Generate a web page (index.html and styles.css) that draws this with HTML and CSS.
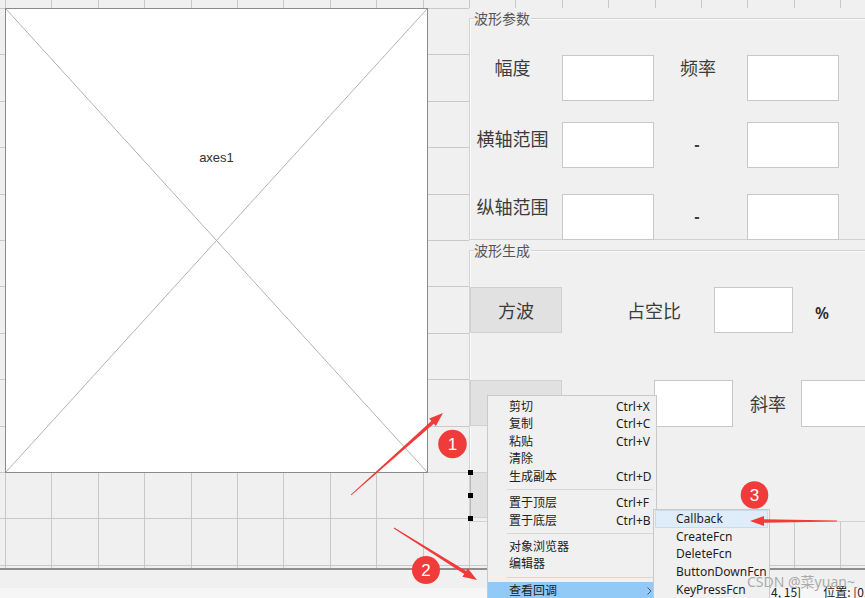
FILE: index.html
```html
<!DOCTYPE html>
<html lang="zh-CN">
<head>
<meta charset="utf-8">
<title>GUIDE 布局编辑器</title>
<link rel="stylesheet" href="styles.css">
</head>
<body>
<div class="editor">
  <div class="canvas">
    <div class="axes">
      <svg class="axes-x" viewBox="0 0 100 100" preserveAspectRatio="none">
        <line x1="0" y1="0" x2="100" y2="100"/>
        <line x1="100" y1="0" x2="0" y2="100"/>
      </svg>
      <span class="axes-label">axes1</span>
    </div>

    <div class="panel panel-params">
      <div class="panel-frame">
        <div class="panel-title">波形参数</div>
        <div class="prow prow-1">
          <span class="plabel">幅度</span>
          <span class="edit"></span>
          <span class="pmid">频率</span>
          <span class="edit"></span>
        </div>
        <div class="prow prow-2">
          <span class="plabel plabel-low">横轴范围</span>
          <span class="edit"></span>
          <span class="pmid pdash">-</span>
          <span class="edit"></span>
        </div>
        <div class="prow prow-3">
          <span class="plabel">纵轴范围</span>
          <span class="edit"></span>
          <span class="pmid pdash">-</span>
          <span class="edit"></span>
        </div>
      </div>
    </div>

    <div class="panel panel-gen">
      <div class="panel-frame">
        <div class="panel-title">波形生成</div>
        <div class="grow grow-1">
          <span class="btn">方波</span>
          <span class="glabel gl-duty">占空比</span>
          <span class="edit edit-s es-duty"></span>
          <span class="pct">%</span>
        </div>
        <div class="grow grow-2">
          <span class="btn"></span>
          <span class="glabel gl-width"></span>
          <span class="edit edit-s es-width"></span>
          <span class="glabel gl-slope">斜率</span>
          <span class="edit edit-s es-slope"></span>
        </div>
        <div class="grow grow-3">
          <span class="btn btn-selected">
            <i class="handle h-top"></i>
            <i class="handle h-mid"></i>
            <i class="handle h-bot"></i>
          </span>
        </div>
      </div>
    </div>
  </div>
  <div class="statusbar">
    <span>大小: [4, 15]</span>
    <span>位置: [0, 0]</span>
  </div>
</div>

<div class="ctx-menu">
  <div class="mi"><span>剪切</span><span>Ctrl+X</span></div>
  <div class="mi"><span>复制</span><span>Ctrl+C</span></div>
  <div class="mi"><span>粘贴</span><span>Ctrl+V</span></div>
  <div class="mi"><span>清除</span><span></span></div>
  <div class="mi"><span>生成副本</span><span>Ctrl+D</span></div>
  <div class="mi-sep"></div>
  <div class="mi"><span>置于顶层</span><span>Ctrl+F</span></div>
  <div class="mi"><span>置于底层</span><span>Ctrl+B</span></div>
  <div class="mi-sep"></div>
  <div class="mi"><span>对象浏览器</span><span></span></div>
  <div class="mi"><span>编辑器</span><span></span></div>
  <div class="mi-sep"></div>
  <div class="mi mi-active"><span>查看回调</span><span></span>
    <svg class="mi-arrow" width="5" height="8" viewBox="0 0 5 8"><path d="M0.5 0.5 L4 4 L0.5 7.5"/></svg>
  </div>
</div>

<div class="submenu">
  <div class="si si-active">Callback</div>
  <div class="si">CreateFcn</div>
  <div class="si">DeleteFcn</div>
  <div class="si">ButtonDownFcn</div>
  <div class="si">KeyPressFcn</div>
</div>

<div class="watermark">CSDN @菜yuan~</div>

<svg class="annot" width="865" height="598" viewBox="0 0 865 598">
  <g class="annot-red">
    <polygon points="351.33,495.37 433.75,423.66 435.88,426.05 443,413 429.22,418.59 431.35,420.98 350.67,494.63"/>
    <polygon points="393.73,528.42 464.17,574.09 462.47,576.8 477,580 467.79,568.32 466.09,571.03 394.27,527.58"/>
    <polygon points="837,521.6 764,522.8 764,526 750,521 764,516 764,519.2 837,520.4"/>
    <circle cx="452.5" cy="444" r="14.3"/>
    <circle cx="426" cy="570" r="14"/>
    <circle cx="754.5" cy="495" r="13.8"/>
  </g>
  <g class="annot-num">
    <text x="452.5" y="450">1</text>
    <text x="426" y="576">2</text>
    <text x="754.5" y="501">3</text>
  </g>
</svg>
</body>
</html>
```

FILE: styles.css
```css
* { box-sizing: border-box; }

html, body {
  margin: 0;
  padding: 0;
}

body {
  width: 865px;
  height: 598px;
  overflow: hidden;
  position: relative;
  background: #f0f0f0;
  font-family: "Noto Sans CJK SC", "Noto Sans", sans-serif;
  color: #333;
}

.editor {
  display: flex;
  flex-direction: column;
  height: 598px;
}

/* ---------- layout canvas with grid ---------- */
.canvas {
  position: relative;
  flex: none;
  height: 570px;
  border-bottom: 2px solid #8e8e8e;
  background-color: #f0f0f0;
  background-image:
    repeating-linear-gradient(90deg, #c9c9c9 5px, #c9c9c9 6px, transparent 6px, transparent 51.4px),
    repeating-linear-gradient(180deg, #c9c9c9 8px, #c9c9c9 9px, transparent 9px, transparent 54.4px);
}

/* axes placeholder */
.axes {
  position: absolute;
  left: 5px;
  top: 8px;
  width: 423px;
  height: 465px;
  background: #fff;
  border: 1px solid #8a8a8a;
  display: flex;
  justify-content: center;
  padding-top: 141px;
}

.axes-x {
  position: absolute;
  inset: 0;
  width: 100%;
  height: 100%;
}

.axes-x line {
  stroke: #b2b2b2;
  stroke-width: 1;
  vector-effect: non-scaling-stroke;
}

.axes-label {
  position: relative;
  font-family: "Liberation Sans", Arial, sans-serif;
  font-size: 13px;
  line-height: 16px;
  height: 16px;
  color: #333;
}

/* ---------- panels ---------- */
.panel {
  position: absolute;
  left: 469px;
  width: 430px;
  padding-top: 10px;
  background: #f0f0f0;
  display: flex;
}

.panel-params {
  top: 8px;
  height: 232px;
}

.panel-gen {
  top: 240px;
  height: 282px;
}

.panel-frame {
  flex: 1;
  border: 1px solid #d2d2d2;
  box-shadow: inset 1px 1px 0 #fbfbfb;
  display: flex;
  flex-direction: column;
}

.panel-title {
  align-self: flex-start;
  margin: -10px 0 0 4px;
  padding-right: 1px;
  height: 18px;
  line-height: 18px;
  font-size: 14px;
  color: #555;
  background: #f0f0f0;
}

.prow {
  display: flex;
  height: 46px;
  flex: none;
}

.prow-1 { margin-top: 28px; }
.prow-2 { margin-top: 21px; }
.prow-3 { margin-top: 26px; }

.plabel {
  width: 85px;
  margin-right: 7px;
  text-align: center;
  font-size: 18px;
  line-height: 24px;
  color: #3c3c3c;
}

.plabel-low { padding-top: 4px; }

.pmid {
  width: 93px;
  padding-right: 5px;
  text-align: center;
  font-size: 18px;
  line-height: 24px;
  color: #3c3c3c;
}

.pdash {
  align-self: center;
  font-family: "Liberation Sans", Arial, sans-serif;
  font-weight: bold;
  font-size: 16px;
  line-height: 16px;
  padding-right: 7px;
}

.edit {
  flex: none;
  width: 92px;
  height: 46px;
  background: #fff;
  border: 1px solid #c8c8c8;
}

/* waveform generation panel */
.grow {
  display: flex;
  align-items: center;
  height: 46px;
  flex: none;
}

.grow-1 { margin-top: 28px; }
.grow-2 { margin-top: 47px; }
.grow-3 { margin-top: 46px; }

.btn {
  position: relative;
  flex: none;
  width: 92px;
  height: 46px;
  background: #e1e1e1;
  border: 1px solid #d0d0d0;
  display: flex;
  align-items: center;
  justify-content: center;
  font-size: 18px;
  color: #3c3c3c;
}

.btn-selected { border-left-color: #b8b8b8; }

.handle {
  position: absolute;
  left: -3px;
  width: 5px;
  height: 5px;
  background: #000;
}

.h-top { top: -3px; }
.h-mid { top: 20px; }
.h-bot { top: 43px; }

.glabel {
  flex: none;
  font-size: 18px;
  line-height: 26px;
  color: #3c3c3c;
}

.gl-duty { margin-left: 65px; }
.gl-width { margin-left: 34px; width: 36px; height: 26px; }
.gl-slope { margin-left: 17px; }

.edit-s {
  width: 79px;
  height: 46px;
}

.es-duty { margin-left: 33px; }
.es-width { margin-left: 22px; height: 47px; }
.es-slope { margin-left: 15px; height: 47px; }

.pct {
  margin-left: 22px;
  margin-top: 5px;
  font-family: "Noto Sans", sans-serif;
  font-weight: 600;
  font-size: 16px;
  color: #2a2a2a;
}

/* ---------- status bar ---------- */
.statusbar {
  flex: 1;
  display: flex;
  gap: 22px;
  padding-left: 737px;
  padding-top: 14px;
  font-size: 12px;
  line-height: 16px;
  white-space: nowrap;
  color: #222;
  background: linear-gradient(#f0f0f0 18px, #f6f6f6 18px);
}

/* ---------- context menu ---------- */
.ctx-menu {
  position: absolute;
  left: 487px;
  top: 395px;
  width: 170px;
  height: 215px;
  padding-top: 1.5px;
  background: #f0f0f0;
  border: 1px solid #c9c9c9;
  font-family: "Noto Sans", "Noto Sans CJK SC", sans-serif;
  font-size: 12px;
  color: #222;
  z-index: 5;
}

.mi {
  position: relative;
  display: grid;
  grid-template-columns: 107px 1fr;
  height: 17.6px;
  line-height: 17.6px;
  padding-left: 21px;
  white-space: nowrap;
}

.mi-sep {
  height: 8.6px;
  display: flex;
  align-items: center;
  padding-left: 19px;
  padding-right: 3px;
}

.mi-sep::after {
  content: "";
  flex: 1;
  border-top: 1px solid #d7d7d7;
}

.mi-active {
  background: #91c9f7;
}

.mi-arrow {
  position: absolute;
  right: 4px;
  top: 5px;
}

.mi-arrow path {
  fill: none;
  stroke: #555;
  stroke-width: 1;
}

/* ---------- submenu ---------- */
.submenu {
  position: absolute;
  left: 653px;
  top: 509px;
  width: 117px;
  height: 100px;
  background: #f0f0f0;
  border: 1px solid #c9c9c9;
  font-family: "Noto Sans", sans-serif;
  font-size: 12px;
  color: #1e1e1e;
  z-index: 6;
}

.si {
  height: 17.7px;
  line-height: 17.7px;
  padding-left: 22px;
  white-space: nowrap;
}

.si-active {
  margin: 0 1px;
  padding-left: 20px;
  line-height: 15.7px;
  background: #dfedfa;
  border: 1px solid #c3ddf3;
}

/* ---------- watermark ---------- */
.watermark {
  position: absolute;
  left: 747px;
  top: 573px;
  font-family: "Noto Sans", "Noto Sans CJK SC", sans-serif;
  font-size: 14px;
  line-height: 18px;
  color: #a9a9a9;
  white-space: nowrap;
  z-index: 8;
  text-shadow: 0 0 1px rgba(255, 255, 255, 0.6);
}

/* ---------- annotations ---------- */
.annot {
  position: absolute;
  left: 0;
  top: 0;
  pointer-events: none;
  z-index: 10;
}

.annot-red {
  fill: #f03b3b;
}

.annot-num {
  fill: #fff;
  font-family: "Liberation Sans", Arial, sans-serif;
  font-size: 17px;
  text-anchor: middle;
}
```
